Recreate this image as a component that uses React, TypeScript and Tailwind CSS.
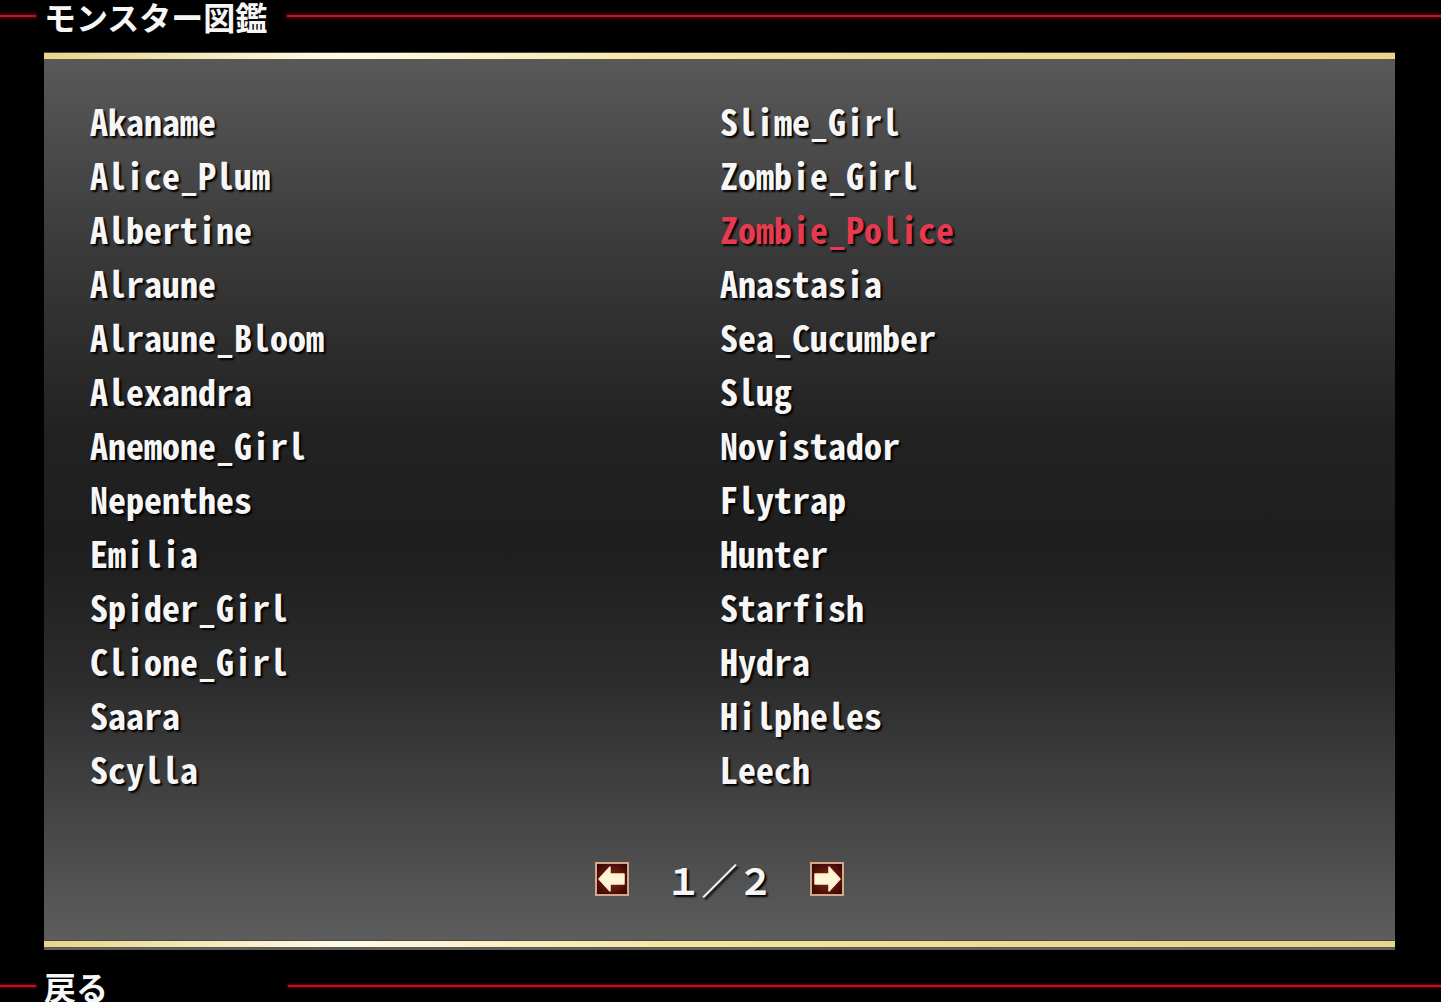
const leftNames = [
  "Akaname",
  "Alice_Plum",
  "Albertine",
  "Alraune",
  "Alraune_Bloom",
  "Alexandra",
  "Anemone_Girl",
  "Nepenthes",
  "Emilia",
  "Spider_Girl",
  "Clione_Girl",
  "Saara",
  "Scylla",
]

const rightNames = [
  "Slime_Girl",
  "Zombie_Girl",
  "Zombie_Police",
  "Anastasia",
  "Sea_Cucumber",
  "Slug",
  "Novistador",
  "Flytrap",
  "Hunter",
  "Starfish",
  "Hydra",
  "Hilpheles",
  "Leech",
]

function RedLine({ className }: { className: string }) {
  return <div className={`h-[2px] bg-[#b3172a] shadow-[0_0_3px_1px_#6a0010] ${className}`} />
}

function GoldStrip() {
  return (
    <div className="flex flex-col">
      <div className="h-[1px] bg-[#4b4939]" />
      <div className="h-[6px] bg-[linear-gradient(90deg,#e8d48a_0%,#fffbea_22%,#f5e6a8_45%,#efdc96_70%,#ecd38a_100%)]" />
      <div className="h-[1px] bg-[#5d5a48]" />
    </div>
  )
}

function ArrowButton({ dir }: { dir: "left" | "right" }) {
  const id = `grad-${dir}`
  return (
    <svg width="34" height="34" viewBox="0 0 34 34" className={dir === "right" ? "-scale-x-100" : ""}>
      <defs>
        <radialGradient id={id} cx="50%" cy="50%" r="60%">
          <stop offset="0%" stopColor="#8a2a18" />
          <stop offset="100%" stopColor="#3a0604" />
        </radialGradient>
      </defs>
      <rect x="1" y="1" width="32" height="32" fill={`url(#${id})`} stroke="#d6a88a" strokeWidth="2" />
      <path
        d="M4 17 L15 5 L15 12 L29 12 L29 22 L15 22 L15 29 Z"
        fill="#fff6d8"
        stroke="#fff1c8"
        strokeWidth="1.5"
        strokeLinejoin="round"
      />
    </svg>
  )
}

function Row({ left, right }: { left: string; right: string }) {
  return (
    <div className="grid grid-cols-[630px_1fr] h-[54px] leading-[54px]">
      <span>{left}</span>
      <span className={right === "Zombie_Police" ? "text-[#e63a50]" : ""}>{right}</span>
    </div>
  )
}

export default function App() {
  return (
    <div className="w-[1441px] h-[1002px] bg-black overflow-hidden flex flex-col font-['Noto_Sans_CJK_JP',sans-serif] text-[#f6f6f6] [text-shadow:2px_2px_2px_#000]">
      <div className="flex items-center h-[30px] pt-[1px]">
        <RedLine className="w-[36px]" />
        <span className="ml-[8px] text-[32px] leading-[30px] font-bold whitespace-nowrap">モンスター図鑑</span>
        <RedLine className="flex-1 ml-[20px]" />
      </div>

      <div className="mt-[22px] ml-[44px] w-[1351px] h-[898px] flex flex-col bg-[linear-gradient(180deg,#5a5a5a_0%,#3a3a3a_22%,#222222_42%,#1e1e1e_55%,#2c2c2c_70%,#4a4a4a_88%,#5f5f5f_100%)]">
        <GoldStrip />
        <div className="flex-1 flex flex-col pt-[33px] pl-[46px] font-['Noto_Sans_Mono_CJK_JP','DejaVu_Sans_Mono',monospace] font-bold text-[36px]">
          {leftNames.map((name, i) => (
            <Row key={name} left={name} right={rightNames[i]} />
          ))}
          <div className="mt-[66px] -ml-[46px] flex items-center justify-center gap-[36px] h-[36px]">
            <ArrowButton dir="left" />
            <span className="leading-[36px] text-[36px] font-['Noto_Sans_CJK_JP',sans-serif]">１／２</span>
            <ArrowButton dir="right" />
          </div>
        </div>
        <GoldStrip />
        <div className="h-[2px]" />
      </div>

      <div className="mt-[20px] flex items-center h-[32px]">
        <RedLine className="w-[36px]" />
        <span className="ml-[8px] text-[32px] leading-[32px] font-bold whitespace-nowrap">戻る</span>
        <RedLine className="flex-1 ml-[180px]" />
      </div>
    </div>
  )
}
